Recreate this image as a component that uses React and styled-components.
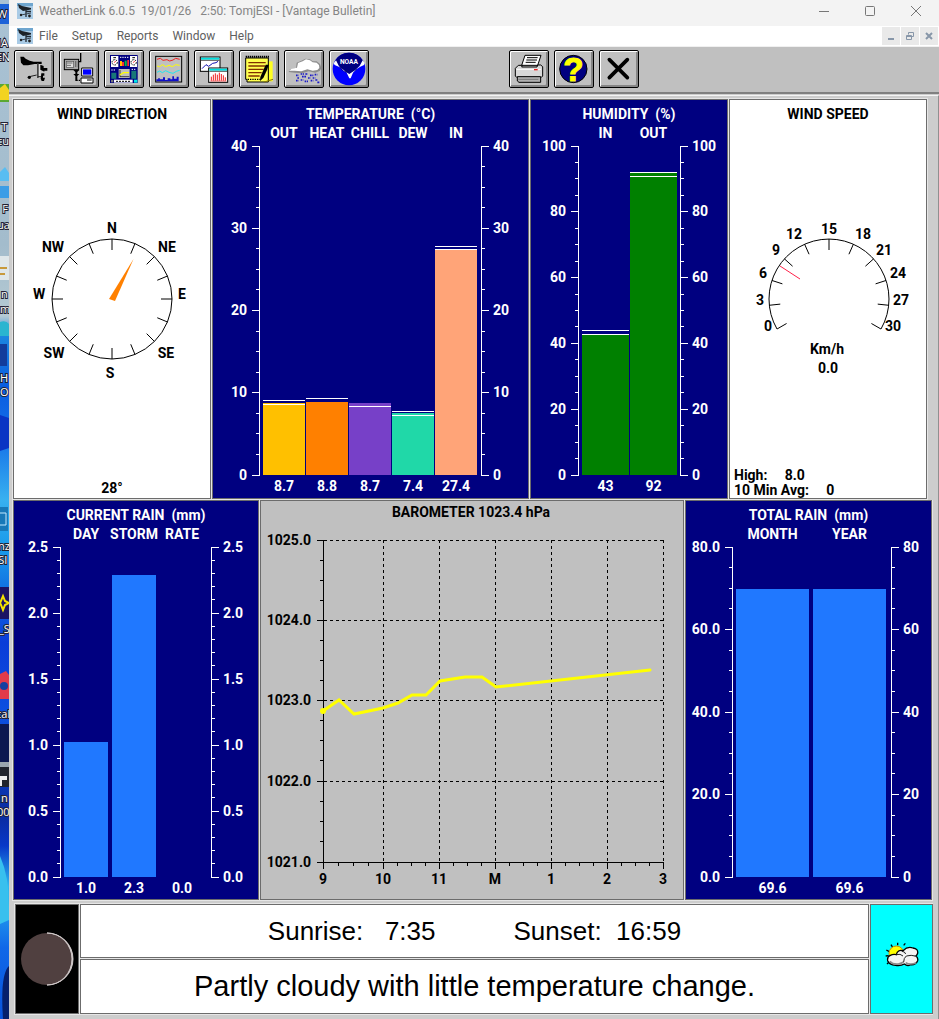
import React from 'react';
import styled, { createGlobalStyle } from 'styled-components';

const tempBars = [
  { name: 'OUT', value: 8.7, text: '8.7', color: '#ffc000', marks: [9.1, 8.6] },
  { name: 'HEAT', value: 8.9, text: '8.8', color: '#ff8000', marks: [9.4] },
  { name: 'CHILL', value: 8.7, text: '8.7', color: '#7740c8', marks: [8.4] },
  { name: 'DEW', value: 7.6, text: '7.4', color: '#20d8a8', marks: [7.8, 7.3] },
  { name: 'IN', value: 27.4, text: '27.4', color: '#ffa478', marks: [27.8, 27.5] },
];

const humidityBars = [
  { name: 'IN', value: 43, text: '43', color: '#008000', marks: [44, 43] },
  { name: 'OUT', value: 92, text: '92', color: '#008000', marks: [92, 91] },
];

const rainBars = [
  { name: 'DAY', value: 1.02, text: '1.0', color: '#2078ff' },
  { name: 'STORM', value: 2.29, text: '2.3', color: '#2078ff' },
  { name: 'RATE', value: 0, text: '0.0', color: '#2078ff' },
];

const totalBars = [
  { name: 'MONTH', value: 69.8, text: '69.6', color: '#2078ff' },
  { name: 'YEAR', value: 69.8, text: '69.6', color: '#2078ff' },
];

const Axis = ({ labels, minor, side, width, plot }) => {
  const left = side === 'left';
  const line = left ? width - 1 : 0;
  const dir = left ? -1 : 1;
  const steps = (labels.length - 1) * minor;
  return (
    <AxisSvg width={width} height={plot}>
      <rect x={line} y="0" width="1" height={plot + 1} />
      {Array.from({ length: steps + 1 }, (_, i) => {
        const len = i % minor === 0 ? 7 : 3;
        return (
          <rect key={i} x={left ? line - len : 1} y={Math.floor((i * plot) / steps)} width={len} height="1" />
        );
      })}
      {labels.map((label, i) => (
        <text
          key={label}
          x={line + dir * 12}
          y={Math.floor((i * plot) / (labels.length - 1)) + 5}
          textAnchor={left ? 'end' : 'start'}
        >
          {label}
        </text>
      ))}
    </AxisSvg>
  );
};

const BarChart = ({ title, bars, max, labels, rightLabels, minor, gap, plot, leftWidth, rightWidth, padRight }) => (
  <ChartGrid $left={leftWidth} $right={rightWidth} $plot={plot}>
    <ChartTitle>{title}</ChartTitle>
    <BarRow $gap={gap} $padRight={padRight} $row={2}>
      {bars.map((bar) => (
        <BarName key={bar.name}>{bar.name}</BarName>
      ))}
    </BarRow>
    <Axis labels={labels} minor={minor} side="left" width={leftWidth} plot={plot} />
    <BarRow $gap={gap} $padRight={padRight} $row={3}>
      {bars.map((bar) => (
        <BarSlot key={bar.name}>
          <Bar $color={bar.color} style={{ height: `${(bar.value / max) * 100}%` }} />
          {(bar.marks || []).map((mark) => (
            <Mark key={mark} style={{ bottom: `${(mark / max) * 100}%` }} />
          ))}
        </BarSlot>
      ))}
    </BarRow>
    <Axis labels={rightLabels || labels} minor={minor} side="right" width={rightWidth} plot={plot} />
    <BarRow $gap={gap} $padRight={padRight} $row={4}>
      {bars.map((bar) => (
        <BarValue key={bar.name}>{bar.text}</BarValue>
      ))}
    </BarRow>
  </ChartGrid>
);

const polar = (cx, cy, r, deg) => {
  const a = (deg * Math.PI) / 180;
  return [cx + r * Math.sin(a), cy - r * Math.cos(a)];
};

const Tick = ({ cx, cy, deg, inner = 49 }) => {
  const [x1, y1] = polar(cx, cy, 60, deg);
  const [x2, y2] = polar(cx, cy, inner, deg);
  return <line x1={x1} y1={y1} x2={x2} y2={y2} stroke="#000" />;
};

const compassLabels = [
  ['N', 98, 13],
  ['NE', 153, 32],
  ['E', 168, 79],
  ['SE', 152, 138],
  ['S', 96, 158],
  ['SW', 40, 138],
  ['W', 25, 79],
  ['NW', 39, 32],
];

const Compass = () => (
  <DialSvg width="196" height="166">
    <circle cx="98" cy="79" r="60" fill="none" stroke="#000" />
    {Array.from({ length: 16 }, (_, i) => (
      <Tick key={i} cx={98} cy={79} deg={i * 22.5} />
    ))}
    <polygon points="119.5,39 101,81 95,79" fill="#ff8000" />
    {compassLabels.map(([text, x, y]) => (
      <text key={text} x={x} y={y}>
        {text}
      </text>
    ))}
  </DialSvg>
);

const speedLabels = [
  ['0', 38, 111],
  ['3', 30, 85],
  ['6', 33, 58],
  ['9', 46, 35],
  ['12', 64, 19],
  ['15', 99, 14],
  ['18', 133, 19],
  ['21', 154, 35],
  ['24', 168, 58],
  ['27', 171, 85],
  ['30', 163, 111],
];

const Speedometer = () => (
  <DialSvg width="196" height="166">
    <path d="M47 109 A60 60 0 1 1 151 109" fill="none" stroke="#000" />
    {speedLabels.map(([text, x, y], i) => (
      <React.Fragment key={text}>
        <Tick cx={99} cy={79} deg={-120 + i * 24} />
        <text x={x} y={y}>
          {text}
        </text>
      </React.Fragment>
    ))}
    <line x1="50" y1="46" x2="70" y2="59" stroke="#ff2048" />
    <text x="97" y="134">Km/h</text>
    <text x="98" y="153">0.0</text>
  </DialSvg>
);

const hours = [
  ['9', 62],
  ['10', 122],
  ['11', 178],
  ['M', 234],
  ['1', 290],
  ['2', 346],
  ['3', 402],
];
const pressures = [
  ['1025.0', 39],
  ['1024.0', 119],
  ['1023.0', 199],
  ['1022.0', 280],
  ['1021.0', 361],
];

const Barometer = () => (
  <BaroSvg viewBox="0 0 422 390" height="390">
    <text x="210" y="16" textAnchor="middle">
      BAROMETER 1023.4 hPa
    </text>
    {pressures.map(([label, y], i) => (
      <React.Fragment key={label}>
        <rect x="56" y={y} width="7" height="1" />
        <text x="50" y={y + 5} textAnchor="end">
          {label}
        </text>
        {i < 4 && <line x1="63" y1={y + 0.5} x2="402" y2={y + 0.5} stroke="#000" strokeDasharray="3 3" />}
        {i < 4 && [20, 40, 60].map((d) => <rect key={d} x="59" y={y + d} width="4" height="1" />)}
      </React.Fragment>
    ))}
    {hours.map(([label, x], i) => (
      <React.Fragment key={label}>
        <rect x={x} y="361" width="1" height="7" />
        <text x={x} y="383" textAnchor="middle">
          {label}
        </text>
        {i > 0 && <line x1={x + 0.5} y1="39" x2={x + 0.5} y2="361" stroke="#000" strokeDasharray="3 3" />}
        {i < 6 && [1, 2, 3].map((q) => <rect key={q} x={x + q * (i ? 14 : 15)} y="362" width="1" height="3" />)}
      </React.Fragment>
    ))}
    <rect x="62" y="39" width="1" height="323" />
    <rect x="62" y="361" width="341" height="1" />
    <polyline
      points="62,210 78,199 93,213 122,207 137,202 151,194 165,194 179,180 204,176 221,176 235,186 389,169"
      fill="none"
      stroke="#ffff00"
      strokeWidth="3"
      strokeLinecap="round"
    />
    <circle cx="62" cy="210" r="3" fill="#ffff00" />
  </BaroSvg>
);

const AppIcon = () => (
  <svg width="16" height="16" viewBox="0 0 16 16" aria-hidden="true">
    <rect width="16" height="16" fill="#a9cbe6" />
    <path d="M0 0h16v3H0z" fill="#6fa6cf" />
    <path d="M1 1l4 2 9 2v1.6L6 8 2 5z" fill="#1c2228" />
    <path d="M9 6v8M9 8.5h5" stroke="#222a33" strokeWidth="1.3" />
    <path d="M9 11l5-1M4 12l5-1" stroke="#3a4652" />
    <circle cx="4" cy="12" r="1.2" fill="#222" />
    <circle cx="12.5" cy="13" r="1.4" fill="#222" />
  </svg>
);

// Toolbar drawings share a 114 x 108 grid, three units to the pixel
const ToolSvg = ({ children }) => (
  <svg width="38" height="36" viewBox="3 3 114 108" aria-hidden="true">
    {children}
  </svg>
);

const StationIcon = () => (
  <ToolSvg>
    <path d="M19 20h10l6 6 12 6 12 3h24v7H62l-20 4H28l-7-8z" />
    <path d="M69 40h5v44h-5z" fill="#444" />
    <path d="M76 42h3v40h-3z" fill="#e8e8e8" />
    <path d="M79 44l10 4v6h11v8H91v3l-12-6z" />
    <path d="M46 80l22-5M72 80h14" stroke="#222" strokeWidth="3" fill="none" />
    <circle cx="46" cy="82" r="5" />
    <path d="M82 70h9v7h-4v6h6l-3 10h-7l-3-7z" />
  </ToolSvg>
);

const DownloadIcon = () => (
  <ToolSvg>
    <path d="M65 9v26h-6" stroke="#000" strokeWidth="4" fill="none" />
    <rect x="16" y="28" width="43" height="31" fill="#a8a8a8" stroke="#000" strokeWidth="3" />
    <rect x="22" y="34" width="22" height="18" fill="#ddd" stroke="#555" strokeWidth="2" />
    <path d="M25 39h15M25 46h10M48 36h7M48 42h7M48 48h7" stroke="#333" strokeWidth="3" strokeDasharray="4 2" />
    <path d="M43 60h18l-9 9zM43 72h18l-9 9zM49 60h6v33h-6z" />
    <path d="M52 91h14" stroke="#000" strokeWidth="4" strokeDasharray="4 3" />
    <path d="M68 54h33v24H68z" fill="#fff" stroke="#000" strokeWidth="3" />
    <path d="M72 58h25v16H72z" fill="#0000ff" />
    <path d="M66 84h36v15H66z" fill="#fff" stroke="#000" strokeWidth="3" />
    <path d="M84 90h14" stroke="#000" strokeWidth="3" />
  </ToolSvg>
);

const BulletinIcon = () => (
  <ToolSvg>
    <rect x="18" y="15" width="83" height="84" fill="#000080" />
    <path d="M21 18h22v33H21zM78 18h21v33H78z" fill="#fff" />
    <circle cx="32" cy="37" r="8" fill="#fff" stroke="#000" strokeWidth="3" strokeDasharray="5 3" />
    <circle cx="89" cy="37" r="8" fill="#fff" stroke="#000" strokeWidth="3" strokeDasharray="5 3" />
    <path d="M28 23h8M85 23h8" stroke="#000" strokeWidth="3" />
    <path d="M31 38l4-5M88 38l4-5" stroke="#f33" strokeWidth="3" />
    <path d="M48 22h26" stroke="#fff" strokeWidth="3" strokeDasharray="4 3" />
    <path d="M48 33h6v15h-6z" fill="#ffc000" />
    <path d="M54 36h6v12h-6zM70 30h5v18h-5z" fill="#ff3030" />
    <path d="M62 32h6v16h-6z" fill="#00c040" />
    <path d="M44 57h33v27H44z" fill="#c0c0c0" />
    <path d="M48 60v20h28" stroke="#000" strokeWidth="2" fill="none" />
    <path d="M47 75l12-7h16" stroke="#ffff00" strokeWidth="4" fill="none" />
    <path d="M22 68h15v18H22zM82 62h15v24H82z" fill="#187878" />
    <path d="M22 60h14M83 58h14" stroke="#fff" strokeWidth="3" strokeDasharray="4 3" />
    <path d="M30 89h56v9H30z" fill="#fff" />
    <path d="M21 90h7v7h-7z" fill="#777" />
    <path d="M90 89h10v9H90z" fill="#00e8e8" />
    <path d="M36 94h44" stroke="#000" strokeWidth="3" strokeDasharray="6 3" />
  </ToolSvg>
);

const PlotIcon = () => (
  <ToolSvg>
    <rect x="20" y="19" width="78" height="77" fill="#c0c0c0" stroke="#000" strokeWidth="3" />
    <path d="M24 28l10-3 8 6 12-2 8 4 10-3 8-5 12 3" stroke="#f02020" strokeWidth="3" fill="none" />
    <path d="M24 48l8 2 8-6 10 6 10-4 10 4 10-6 12 2" stroke="#ffff00" strokeWidth="3" fill="none" />
    <path d="M24 67l8-4 8 5 10-6 10 5 12 3 10-6 10-3" stroke="#20e8f0" strokeWidth="3" fill="none" />
    <path d="M22 94v-6h6v-4h4v4h10v-6h6v8h8v-5h8v3h6v-9h5v7h8v-6h6v14z" fill="#1010c8" />
  </ToolSvg>
);

const SummaryIcon = () => (
  <ToolSvg>
    <rect x="19" y="21" width="59" height="43" fill="#fff" stroke="#000" strokeWidth="3" />
    <path d="M21 23h55v6H21z" fill="#00e0e0" />
    <path d="M21 31h55" stroke="#000" strokeWidth="2" />
    <path d="M24 56l12-12 8 5 12-9 10-2 6-4" stroke="#1010b0" strokeWidth="3" fill="none" />
    <rect x="44" y="54" width="57" height="43" fill="#fff" stroke="#000" strokeWidth="3" />
    <path d="M46 56h53v6H46z" fill="#00e0e0" />
    <path d="M46 64h53" stroke="#000" strokeWidth="2" />
    <path d="M52 92V80M58 92V74M64 92V70M70 92V74M76 92V68M82 92V72M88 92V76M94 92V82" stroke="#f02020" strokeWidth="3" />
    <path d="M49 93h48" stroke="#f02020" strokeWidth="2" />
  </ToolSvg>
);

const NotesIcon = () => (
  <ToolSvg>
    <path d="M26 34h75v60H26z" fill="#ffff20" />
    <path d="M20 24h68v72H24v-8h-4z" fill="#ffff50" stroke="#000" strokeWidth="3" />
    <path d="M20 20h70" stroke="#000" strokeWidth="6" strokeDasharray="4 2" />
    <path d="M28 38h52M28 48h50M28 58h46M28 68h40M28 78h34" stroke="#803000" strokeWidth="4" />
    <path d="M26 88h40" stroke="#000" strokeWidth="4" strokeDasharray="4 3" />
    <path d="M80 44h9l-4 14-12 26-10 9 1-12z" />
    <path d="M76 96l26-8" stroke="#887800" strokeWidth="3" />
  </ToolSvg>
);

const RainIcon = () => (
  <ToolSvg>
    <path d="M14 66l4-8 18-4 2-16 14-6 12-6 14 2 8 6h12l10 8 4 12-4 8-14 6-20-4-20 6-22-2z" fill="#8c8c8c" />
    <path d="M15 62l8-6 16-3 3-14 14-5 10-6 12 3 8 6 12 1 7 7 1 9-6 6-14 2-16-4-18 6-20-2z" fill="#fff" />
    <path
      d="M36 76h8M50 72h10M64 72h8M78 76h10M92 74h8M40 84h6M54 80h12M72 84h8M86 84h8M36 92h8M50 90h8M62 94h10M80 92h8M94 90h8M100 97h8"
      stroke="#1818c8"
      strokeWidth="5"
      strokeDasharray="5 2"
    />
  </ToolSvg>
);

const NoaaIcon = () => (
  <ToolSvg>
    <circle cx="60" cy="57" r="49" fill="#0000ff" />
    <path d="M18 32a49 49 0 0 1 84 0L82 60 62 74 38 60z" fill="#000080" />
    <path
      d="M14 40l7-9 9 18 14 13 17 10 17-11 14-13 9-17 6 8-2 6-11 5-12 8-10 10-7 17h-4l-8-17-10-9-12-8-14-6z"
      fill="#fff"
    />
    <NoaaText x="60" y="43">
      NOAA
    </NoaaText>
  </ToolSvg>
);

const PrintIcon = () => (
  <ToolSvg>
    <path d="M48 16h48L86 46H38z" fill="#fff" stroke="#000" strokeWidth="3" />
    <path d="M54 23h32M52 30h32M50 37h30" stroke="#000" strokeWidth="3" />
    <path d="M28 46l-9 9v23l4 4h74l4-4V50l-6-5H86l-2 6H38l2-5z" fill="#d8d8d8" stroke="#000" strokeWidth="3" />
    <path d="M22 58h74" stroke="#fff" strokeWidth="3" />
    <path d="M75 59h11" stroke="#f02020" strokeWidth="4" />
    <path d="M25 80h70v17H30l-5-4z" fill="#b0b0b0" stroke="#000" strokeWidth="3" />
    <path d="M28 88h60" stroke="#777" strokeWidth="3" />
  </ToolSvg>
);

const HelpIcon = () => (
  <ToolSvg>
    <circle cx="58" cy="57" r="41" fill="#000080" stroke="#000" strokeWidth="3" />
    <HelpText x="58" y="93">
      ?
    </HelpText>
  </ToolSvg>
);

const CloseIcon = () => (
  <ToolSvg>
    <path d="M31 29l54 54M85 29L31 83" stroke="#000" strokeWidth="11" strokeLinecap="round" />
  </ToolSvg>
);

const tools = [
  ['Station', StationIcon],
  ['Download', DownloadIcon],
  ['Bulletin', BulletinIcon],
  ['Plot', PlotIcon],
  ['Summary', SummaryIcon],
  ['Notes', NotesIcon],
  ['Rain', RainIcon],
  ['NOAA', NoaaIcon],
];
const rightTools = [
  ['Print', PrintIcon],
  ['Help', HelpIcon],
  ['Close report', CloseIcon],
];

const desktopText = [
  ['W', -3, 18],
  ['IA', -2, 47],
  ['EN', -4, 61],
  ['0 T', -8, 131],
  ['cu', -3, 145],
  ['0 F', -7, 213],
  ['ua', -3, 229],
  ['n', 1, 298],
  ['m', 0, 313],
  ['H', 0, 382],
  ['O', 0, 396],
  ['nz', -2, 550],
  ['eSI', -8, 564],
  ['_S', -1, 633],
  ['cal', -4, 718],
  ['n', 1, 802],
  ['00', -3, 816],
];

const Desktop = () => (
  <DesktopSvg width="9" height="1019" aria-hidden="true">
    <rect y="4" width="9" height="20" fill="#1c62d8" />
    <rect y="84" width="9" height="18" fill="#5aa832" />
    <path d="M0 88l5-4 4 6v10H0z" fill="#f2d321" />
    <path d="M0 172l5-5 4 6v8H0z" fill="#58bdf2" />
    <rect y="186" width="9" height="12" fill="#3b9de6" />
    <rect y="256" width="9" height="24" fill="#dfe7ea" />
    <path d="M0 268h7M0 274h5" stroke="#c89a3c" strokeWidth="2" />
    <path d="M0 322q6-2 9 2v12H0z" fill="#2ab5d0" />
    <rect y="344" width="7" height="22" fill="#123c9c" />
    <path d="M0 415l9 3v30l-9 3z" fill="#0a34c4" />
    <rect y="507" width="8" height="24" fill="#1878b8" />
    <path d="M0 513h6v12H0" stroke="#bfe8ff" fill="none" />
    <rect y="587" width="9" height="32" fill="#1c1464" />
    <path d="M3 596l2 5 4 2-4 2-2 5-2-5-1-2z" fill="none" stroke="#f5e400" strokeWidth="2" />
    <path d="M0 674l6-3 3 4v24H0z" fill="#e23b4a" />
    <circle cx="4" cy="686" r="4" fill="#1440a0" />
    <rect y="724" width="9" height="38" fill="#0c1850" />
    <rect y="762" width="9" height="5" fill="#9aa6ae" />
    <rect y="767" width="9" height="20" fill="#20242c" />
    <path d="M0 776h7v4H2v6H0z" fill="#eee" />
    <path d="M0 856q9 20 9 50v14l-9 4z" fill="#38c0ee" />
    <path d="M9 966q-9 8-6 53h6z" fill="#06206c" />
    {desktopText.map(([text, x, y]) => (
      <text key={y} x={x} y={y}>
        {text}
      </text>
    ))}
  </DesktopSvg>
);

const Moon = () => (
  <svg width="54" height="54" viewBox="0 0 54 54" role="img" aria-label="New moon">
    <circle cx="27" cy="27" r="26" fill="#504040" />
    <path d="M27 1a26 26 0 0 1 0 52a25 26 0 0 0 0-52z" fill="#e8e4e4" stroke="#cfc8c8" />
  </svg>
);

const PartlyCloudy = () => (
  <svg width="34" height="34" viewBox="0 0 102 102" role="img" aria-label="Partly cloudy">
    <path d="M38 2v8M18 8l5 8M4 24l9 5M2 42l9-1M56 10l5-6M10 62l-4 4" stroke="#000" strokeWidth="4" />
    <circle cx="34" cy="34" r="22" fill="#ffff00" stroke="#c89000" strokeWidth="3" />
    <path
      d="M34 38q4-16 20-12 14-14 30-8 16 2 14 16-2 6-6 8 8 4 6 14-6 14-22 12-8 6-18-2-10 6-26 4-20-2-24-14-2-12 8-16 8-4 18-2z"
      fill="#f4f4f4"
      stroke="#000"
      strokeWidth="4"
    />
    <path d="M14 58q10 10 26 8 10-2 16-6M62 62q14 8 32 0" fill="none" stroke="#8a8a8a" strokeWidth="5" />
    <path d="M34 38q12-4 20 4M50 28q10 0 12 8M64 42q16-4 26 0M64 42q-8 6-8 18" fill="none" stroke="#222" strokeWidth="3" />
  </svg>
);

export default function App() {
  return (
    <>
      <GlobalStyle />
      <Page>
        <Desktop />
        <Window>
          <TitleBar>
            <AppIcon />
            <TitleText>{'WeatherLink 6.0.5  19/01/26   2:50: TomjESI - [Vantage Bulletin]'}</TitleText>
            <WindowButton aria-label="Minimize">
              <svg width="12" height="12"><path d="M1 6.5h10" stroke="#777" /></svg>
            </WindowButton>
            <WindowButton aria-label="Maximize">
              <svg width="12" height="12"><rect x="1.5" y="1.5" width="9" height="9" rx="1" fill="none" stroke="#777" /></svg>
            </WindowButton>
            <WindowButton aria-label="Close">
              <svg width="12" height="12"><path d="M1 1l10 10M11 1L1 11" stroke="#777" /></svg>
            </WindowButton>
          </TitleBar>
          <MenuBar>
            <AppIcon />
            <MenuItems>
              {['File', 'Setup', 'Reports', 'Window', 'Help'].map((item) => (
                <MenuItem key={item}>{item}</MenuItem>
              ))}
            </MenuItems>
            <ChildButton aria-label="Minimize bulletin">
              <svg width="10" height="10"><path d="M2 8h6" stroke="#8796a8" strokeWidth="2" /></svg>
            </ChildButton>
            <ChildButton aria-label="Restore bulletin">
              <svg width="10" height="10">
                <path d="M3.5 3.5v-2h5v4h-2M1.5 4.5h5v4h-5zM1.5 5.5h5" fill="none" stroke="#8796a8" />
              </svg>
            </ChildButton>
            <ChildButton aria-label="Close bulletin">
              <svg width="10" height="10"><path d="M2 2l6 6M8 2L2 8" stroke="#8796a8" strokeWidth="2" /></svg>
            </ChildButton>
          </MenuBar>
          <Toolbar>
            <ToolGroup>
              {tools.map(([name, Icon]) => (
                <ToolButton key={name} aria-label={name}>
                  <Icon />
                </ToolButton>
              ))}
            </ToolGroup>
            <ToolGroup>
              {rightTools.map(([name, Icon]) => (
                <ToolButton key={name} aria-label={name}>
                  <Icon />
                </ToolButton>
              ))}
            </ToolGroup>
          </Toolbar>
          <Client>
            <TopRow>
              <Panel>
                <PanelTitle>WIND DIRECTION</PanelTitle>
                <Compass />
                <Degrees>28°</Degrees>
              </Panel>
              <Panel $navy>
                <BarChart
                  title="TEMPERATURE  (°C)"
                  bars={tempBars}
                  max={40}
                  labels={['40', '30', '20', '10', '0']}
                  minor={4}
                  gap={1}
                  plot={329}
                  leftWidth={47}
                  rightWidth={47}
                  padRight={4}
                />
              </Panel>
              <Panel $navy>
                <BarChart
                  title="HUMIDITY  (%)"
                  bars={humidityBars}
                  max={100}
                  labels={['100', '80', '60', '40', '20', '0']}
                  minor={4}
                  gap={1}
                  plot={329}
                  leftWidth={48}
                  rightWidth={47}
                  padRight={3}
                />
              </Panel>
              <Panel>
                <PanelTitle>WIND SPEED</PanelTitle>
                <Speedometer />
                <Readings>
                  <div>{'High:     8.0'}</div>
                  <div>{'10 Min Avg:     0'}</div>
                </Readings>
              </Panel>
            </TopRow>
            <MiddleRow>
              <Panel $navy>
                <BarChart
                  title="CURRENT RAIN  (mm)"
                  bars={rainBars}
                  max={2.5}
                  labels={['2.5', '2.0', '1.5', '1.0', '0.5', '0.0']}
                  minor={5}
                  gap={4}
                  plot={330}
                  leftWidth={47}
                  rightWidth={47}
                  padRight={7}
                />
              </Panel>
              <Panel $gray>
                <Barometer />
              </Panel>
              <Panel $navy>
                <BarChart
                  title="TOTAL RAIN  (mm)"
                  bars={totalBars}
                  max={80}
                  labels={['80.0', '60.0', '40.0', '20.0', '0.0']}
                  rightLabels={['80', '60', '40', '20', '0']}
                  minor={4}
                  gap={4}
                  plot={330}
                  leftWidth={47}
                  rightWidth={40}
                  padRight={5}
                />
              </Panel>
            </MiddleRow>
            <BottomRow>
              <SkyCell $color="#000">
                <Moon />
              </SkyCell>
              <Messages>
                <SunLine>
                  <span>{'Sunrise:   7:35'}</span>
                  <span>{'Sunset:  16:59'}</span>
                </SunLine>
                <Forecast>Partly cloudy with little temperature change.</Forecast>
              </Messages>
              <SkyCell $color="#00ffff">
                <PartlyCloudy />
              </SkyCell>
            </BottomRow>
          </Client>
        </Window>
      </Page>
    </>
  );
}

const GlobalStyle = createGlobalStyle`
  * {
    box-sizing: border-box;
  }
  body {
    margin: 0;
    background: #cdcdcd;
    font-family: Roboto, 'Liberation Sans', sans-serif;
  }
  svg {
    display: block;
    flex: none;
  }
  button {
    padding: 0;
    border: 0;
    background: none;
  }
`;

const Page = styled.div`
  display: flex;
  min-height: 100vh;
`;

const DesktopSvg = styled.svg`
  background: linear-gradient(#a9c2d4 0, #a3bccc 24%, #b5cad3 31%, #1c86e0 33%, #0a5ce0 38%, #1570e8 43%, #38b0f0 49%, #1899ea 54%, #0a3cd8 63%, #0c50e0 70%, #0a2ca0 80%, #0838c8 83%, #2cb8f0 87%, #1068e8 93%, #0a54dc 100%);
  & > text {
    font: 11px 'Open Sans', sans-serif;
    fill: #fff;
    stroke: #223;
    stroke-width: 2px;
    paint-order: stroke;
  }
`;

const Window = styled.main`
  flex: 1;
  display: flex;
  flex-direction: column;
  min-width: 0;
`;

const TitleBar = styled.header`
  display: flex;
  align-items: center;
  height: 26px;
  padding: 0 0 4px 8px;
  background: #f3f3f3;
`;

const TitleText = styled.h1`
  flex: 1;
  margin: 0 0 0 6px;
  font: 12px Roboto, sans-serif;
  white-space: pre;
  color: #858585;
`;

const WindowButton = styled.button`
  display: flex;
  align-items: center;
  justify-content: center;
  width: 46px;
  height: 22px;
`;

const MenuBar = styled.nav`
  display: flex;
  align-items: center;
  gap: 1px;
  height: 21px;
  padding: 0 1px 0 8px;
  background: #fff;
  border-bottom: 1px solid #f0f0f0;
`;

const MenuItems = styled.div`
  flex: 1;
  display: flex;
  gap: 14px;
  padding-left: 5px;
`;

const MenuItem = styled.button`
  font: 12px Roboto, sans-serif;
  color: #606060;
`;

const ChildButton = styled.button`
  display: flex;
  align-items: center;
  justify-content: center;
  width: 18px;
  height: 18px;
  background: #e9e9e9;
`;

const Toolbar = styled.div`
  display: flex;
  gap: 140px;
  height: 47px;
  padding: 3px 5px;
  background: #c0c0c0;
  border-bottom: 2px solid #808080;
`;

const ToolGroup = styled.div`
  display: flex;
  gap: 5px;
`;

const ToolButton = styled.button`
  width: 40px;
  height: 38px;
  border: 1px solid #000;
  border-radius: 2px;
  background: #c0c0c0;
  box-shadow: inset 1px 1px #fff, inset -2px -2px #868686;
`;

const NoaaText = styled.text`
  font: bold 20px Roboto, sans-serif;
  fill: #fff;
  text-anchor: middle;
`;

const HelpText = styled.text`
  font: bold 100px 'Liberation Sans', sans-serif;
  fill: #ffff00;
  stroke: #ffff00;
  stroke-width: 3px;
  text-anchor: middle;
`;

const Client = styled.section`
  flex: 1;
  margin-top: 1px;
  padding: 2px 5px 4px 3px;
  border-top: 1px solid #f4f4f4;
  border-right: 1px solid #909090;
  background: #cdcdcd;
`;

const PanelRow = styled.div`
  display: grid;
  gap: 1px;
  background: #e6e6e6;
`;

const TopRow = styled(PanelRow)`
  grid-template-columns: 198fr 317fr 198fr 198fr;
  margin-right: 5px;
  padding: 1px;
`;

const MiddleRow = styled(PanelRow)`
  grid-template-columns: 246fr 424fr 247fr;
  padding: 0 1px 1px;
`;

const BottomRow = styled(PanelRow)`
  grid-template-columns: 64px 1fr 63px;
  margin: 2px 0 0 2px;
  padding: 1px 0 1px 1px;
`;

const panelBackground = ({ $navy, $gray }) => ($navy ? '#000080' : $gray ? '#c0c0c0' : '#fff');

const Panel = styled.div`
  display: flex;
  flex-direction: column;
  min-width: 0;
  height: 400px;
  overflow: hidden;
  border: 1px solid #6c6c6c;
  background: ${panelBackground};
  color: ${({ $navy }) => ($navy ? '#fff' : '#000')};
  font-size: 14px;
  font-weight: 700;
  line-height: 16px;
  white-space: pre;
`;

const PanelTitle = styled.h2`
  margin: 6px 0 98px;
  font-size: 14px;
  line-height: 16px;
  text-align: center;
`;

const DialSvg = styled.svg`
  align-self: center;
  & > text {
    text-anchor: middle;
  }
`;

const Degrees = styled.div`
  margin-top: auto;
  padding-bottom: 2px;
  text-align: center;
`;

const Readings = styled.div`
  margin-top: auto;
  padding-left: 4px;
  line-height: 15px;
`;

const BaroSvg = styled.svg`
  width: 100%;
`;

const ChartGrid = styled.div`
  display: grid;
  grid-template-columns: ${({ $left }) => $left}px 1fr ${({ $right }) => $right}px;
  grid-template-rows: 25px 21px ${({ $plot }) => $plot}px 22px;
`;

const ChartTitle = styled.h2`
  grid-column: 1 / -1;
  margin: 6px 0 0;
  font-size: 14px;
  line-height: 16px;
  text-align: center;
`;

const AxisSvg = styled.svg`
  grid-row: 3;
  overflow: visible;
  fill: #fff;
`;

const BarRow = styled.div`
  grid-row: ${({ $row }) => $row};
  grid-column: 2;
  display: flex;
  gap: ${({ $gap }) => $gap}px;
  padding: 0 ${({ $padRight }) => $padRight}px 0 3px;
`;

const BarName = styled.div`
  flex: 1 1 0;
  display: flex;
  justify-content: center;
  min-width: 0;
`;

const BarValue = styled(BarName)`
  padding-top: 3px;
`;

const BarSlot = styled.div`
  position: relative;
  flex: 1 1 0;
  display: flex;
  align-items: flex-end;
`;

const Bar = styled.div`
  width: 100%;
  background: ${({ $color }) => $color};
`;

const Mark = styled.div`
  position: absolute;
  left: 0;
  right: 0;
  height: 1px;
  margin-bottom: -1px;
  background: #fff;
`;

const SkyCell = styled.div`
  display: flex;
  align-items: center;
  justify-content: center;
  border: 1px solid #6c6c6c;
  background: ${({ $color }) => $color};
`;

const Messages = styled.div`
  display: grid;
  gap: 1px;
  color: #000;
  font-family: 'Liberation Sans', Arial, sans-serif;
  white-space: pre;
`;

const Message = styled.p`
  display: flex;
  align-items: center;
  justify-content: center;
  height: 54px;
  margin: 0;
  border: 1px solid #6c6c6c;
  background: #fff;
`;

const SunLine = styled(Message)`
  gap: 78px;
  font-size: 26px;
`;

const Forecast = styled(Message)`
  height: 55px;
  font-size: 29px;
`;
